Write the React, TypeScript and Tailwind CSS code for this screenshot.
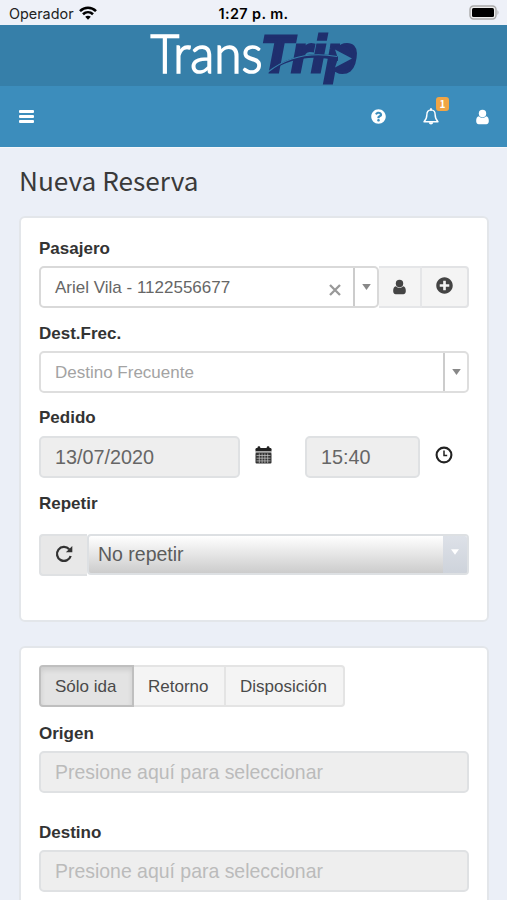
import type { ReactNode } from "react";
import { FaPlusCircle, FaQuestionCircle } from "react-icons/fa";

function UserIcon({ className }: { className?: string }) {
  return (
    <svg viewBox="0 0 14 16" fill="currentColor" className={className}>
      <circle cx="7" cy="4.2" r="4" />
      <path d="M3.2 7.2C1 7.6 0.2 9.6 0.2 12.3C0.2 14.5 1 15.7 3 15.7H11C13 15.7 13.8 14.5 13.8 12.3C13.8 9.6 13 7.6 10.8 7.2C9.8 8.3 8.4 8.8 7 8.8C5.6 8.8 4.2 8.3 3.2 7.2Z" />
    </svg>
  );
}

function WifiIcon() {
  return (
    <svg viewBox="0 0 18 14" className="h-[14px] w-[18px]" fill="none" stroke="#000" strokeWidth="2.6">
      <path d="M1 5.1C5.6 0.6 12.4 0.6 17 5.1" />
      <path d="M4 8.3C6.9 5.5 11.1 5.5 14 8.3" />
      <path d="M9 13.7L6.2 10.8C7.8 9.3 10.2 9.3 11.8 10.8Z" fill="#000" stroke="none" />
    </svg>
  );
}

function BellIcon() {
  return (
    <svg viewBox="0 0 16 17" className="h-[17px] w-4" fill="none" stroke="#fff" strokeWidth="1.4">
      <path d="M8 0.9V2" strokeWidth="1.8" strokeLinecap="round" />
      <path d="M8 1.9C5.2 1.9 3.9 4 3.9 6.2C3.9 9.8 3 11.7 1 13.7H15C13 11.7 12.1 9.8 12.1 6.2C12.1 4 10.8 1.9 8 1.9Z" strokeLinejoin="round" />
      <path d="M5.8 14.2C6 17.2 10 17.2 10.2 14.2Z" fill="#fff" stroke="none" />
    </svg>
  );
}

function CalendarIcon() {
  return (
    <svg viewBox="0 0 17 18" className="h-[18px] w-[17px]">
      <path d="M0.5 3.2Q0.5 2 1.7 2H15.3Q16.5 2 16.5 3.2V5.2H0.5Z" fill="#222" />
      <rect x="2.6" y="0.2" width="2.6" height="3.8" rx="1" fill="#222" />
      <rect x="11.8" y="0.2" width="2.6" height="3.8" rx="1" fill="#222" />
      <rect x="0.5" y="5" width="16" height="2" fill="#aaa" />
      <rect x="0.5" y="6.8" width="16" height="10.6" rx="1" fill="#333" />
      <path d="M1.5 9.5H15.5M1.5 12.2H15.5M1.5 14.9H15.5M4.3 7.4V17M7.1 7.4V17M9.9 7.4V17M12.7 7.4V17" stroke="#ccc" strokeWidth="0.7" />
    </svg>
  );
}

function ClockIcon() {
  return (
    <svg viewBox="0 0 18 18" className="h-[18px] w-[18px]" fill="none" stroke="#222">
      <circle cx="9" cy="9" r="7.4" strokeWidth="2.1" />
      <path d="M9 4.6V9.5H12.2" strokeWidth="1.5" />
    </svg>
  );
}

function RepeatIcon() {
  return (
    <svg viewBox="0 0 18 18" className="h-[18px] w-[18px]">
      <path d="M14.2 4.2A7 7 0 1 0 15.7 11" fill="none" stroke="#333" strokeWidth="2.3" />
      <path d="M17.3 0.9V7.3H10.9Z" fill="#333" />
    </svg>
  );
}

function Caret({ className }: { className?: string }) {
  return (
    <svg viewBox="0 0 10 7" className={className} fill="currentColor">
      <path d="M0 0H10L5 7Z" />
    </svg>
  );
}

function Logo() {
  return (
    <svg viewBox="0 0 210 60" className="h-[60px] w-[210px] overflow-visible">
      <text x="1.5" y="47" fill="#fff" stroke="#fff" strokeWidth="1.7" fontFamily="Lato, sans-serif" fontWeight="300" fontSize="54" textLength="112" lengthAdjust="spacingAndGlyphs">
        Trans
      </text>
      <text x="112" y="46" fill="#1f2f6e" stroke="#1f2f6e" strokeWidth="3" fontFamily="'Liberation Sans', sans-serif" fontStyle="italic" fontWeight="700" fontSize="52" textLength="96" lengthAdjust="spacingAndGlyphs">
        Trip
      </text>
      {/* Arrow that sweeps through the word, its head sits in the last bowl */}
      <ellipse cx="192" cy="32" rx="11" ry="13" fill="#1f2f6e" />
      <path d="M186 23.5L203 32.5L186 41.5L188 35.5V29.5Z" fill="#367fa9" />
      <path d="M120 46C140 33 162 28 189 35V30.5C162 25 138 30 120 46Z" fill="#1f2f6e" />
      <path d="M119 46C138 31 160 25.5 188 30.5" fill="none" stroke="#367fa9" strokeWidth="1.2" />
    </svg>
  );
}

function Label({ children }: { children: ReactNode }) {
  return <div className="h-5 text-[17px] leading-5 font-bold text-[#333]">{children}</div>;
}

function PlaceField({ label }: { label: string }) {
  return (
    <div>
      <Label>{label}</Label>
      <div className="mt-[7px] flex h-[42px] items-center rounded-[5px] border-2 border-[#dfe1e3] bg-[#eee] px-3.5 pt-0.5 text-[19.45px] text-[#bbb]">
        Presione aquí para seleccionar
      </div>
    </div>
  );
}

export default function App() {
  return (
    <main className="h-[900px] w-[507px] overflow-hidden bg-[#ebeff7] font-['Liberation_Sans',sans-serif]">
      {/* Status bar */}
      <div className="flex h-[25px] items-center justify-between bg-[#eef1f8] pr-[7px] pl-[9px]">
        <div className="flex w-[170px] items-center gap-[5px] font-['Inter',sans-serif] text-[14.4px] leading-5 text-[#222]">
          <span className="pt-0.5">Operador</span>
          <WifiIcon />
        </div>
        <div className="pt-0.5 font-['Inter',sans-serif] text-[14.4px] leading-5 font-semibold tracking-[0.4px] whitespace-nowrap text-black">1:27 p. m.</div>
        <div className="flex w-[172px] justify-end">
          <svg viewBox="0 0 31 15" className="h-[15px] w-[31px]">
            <rect x="1" y="1" width="26" height="13" rx="3.5" fill="#eee" stroke="#aaa" strokeWidth="1.4" />
            <rect x="3" y="3" width="22" height="9" rx="1.5" />
            <path d="M28.5 5Q30.5 7.5 28.5 10Z" fill="#aaa" />
          </svg>
        </div>
      </div>

      {/* Brand bar */}
      <div className="flex h-[61px] justify-center bg-[#367fa9] pt-px">
        <Logo />
      </div>

      {/* Navbar */}
      <div className="flex h-[62px] items-center border-b border-[#f5f7fa] bg-[#3c8dbc] pr-[18px] pl-[19px] text-white">
        <div className="flex flex-col gap-[2px]">
          <span className="h-[3px] w-[15px] rounded-[1px] bg-white" />
          <span className="h-[3px] w-[15px] rounded-[1px] bg-white" />
          <span className="h-[3px] w-[15px] rounded-[1px] bg-white" />
        </div>
        <div className="ml-auto flex items-center">
          <FaQuestionCircle size={15} />
          <div className="relative ml-[37px]">
            <BellIcon />
            <span className="absolute -top-[11px] left-[13px] flex h-[14px] w-[13px] items-center justify-center rounded-[3px] bg-[#f0a545] font-['Noto_Sans_CJK_SC',sans-serif] text-[10px] leading-none font-bold">
              1
            </span>
          </div>
          <UserIcon className="ml-[37px] h-4 w-[13px]" />
        </div>
      </div>

      <h1 className="flex h-[68px] items-center pb-0.5 pl-[19px] font-['Noto_Sans_CJK_SC',sans-serif] text-[26.2px] text-[#3a3a3a]">
        Nueva Reserva
      </h1>

      {/* Passenger, destination and schedule */}
      <section className="mx-[19px] h-[406px] w-[470px] rounded-[6px] border-2 border-[#e3e6ea] bg-white px-[18px] pt-[21px]">
        <Label>Pasajero</Label>
        <div className="mt-[7px] flex h-[42px]">
          <div className="flex w-[340px] rounded-[5px] border-2 border-[#d9d9d9] bg-white">
            <div className="flex flex-1 items-center pt-0.5 pl-3.5 text-[17px] text-[#666]">Ariel Vila - 1122556677</div>
            <svg viewBox="0 0 12 12" className="mt-4 mr-3 h-3 w-3" stroke="#999" strokeWidth="2.3">
              <path d="M1 1L11 11M11 1L1 11" />
            </svg>
            <div className="flex w-6 items-center justify-center border-l-2 border-[#ccc] text-[#888]">
              <Caret className="h-[6px] w-[9px]" />
            </div>
          </div>
          <div className="flex w-[43px] items-center justify-center border-y-2 border-r-2 border-[#e5e6e8] bg-[#f4f4f4] text-[#444]">
            <UserIcon className="h-4 w-[13px]" />
          </div>
          <div className="flex flex-1 items-center justify-center rounded-r-[4px] border-y-2 border-r-2 border-[#e2e3e5] bg-[#f4f4f4] text-[#444]">
            <FaPlusCircle size={17} className="mb-[3px]" />
          </div>
        </div>

        <div className="mt-4">
          <Label>Dest.Frec.</Label>
          <div className="mt-[7px] flex h-[42px] rounded-[5px] border-2 border-[#dedede] bg-white">
            <div className="flex flex-1 items-center pt-0.5 pl-3.5 text-[17px] text-[#a3a3a3]">Destino Frecuente</div>
            <div className="flex w-6 items-center justify-center border-l-2 border-[#ccc] text-[#888]">
              <Caret className="h-[6px] w-[9px]" />
            </div>
          </div>
        </div>

        <div className="mt-[15px]">
          <Label>Pedido</Label>
          <div className="mt-2 flex h-[42px]">
            <div className="flex w-[201px] items-center rounded-[5px] border-2 border-[#dfe1e3] bg-[#eee] pt-0.5 pl-3.5 text-[19.8px] text-[#666]">13/07/2020</div>
            <div className="mt-[10px] ml-[15px]">
              <CalendarIcon />
            </div>
            <div className="ml-[33px] flex w-[115px] items-center rounded-[5px] border-2 border-[#dfe1e3] bg-[#eee] pt-0.5 pl-3.5 text-[19.8px] text-[#666]">15:40</div>
            <div className="mt-[10px] ml-[15px]">
              <ClockIcon />
            </div>
          </div>
        </div>

        <div className="mt-4">
          <Label>Repetir</Label>
          <div className="mt-5 flex h-[42px]">
            <div className="flex w-12 items-center justify-center rounded-l-[4px] border-2 border-r-0 border-[#dfe1e3] bg-[#e8e8e8] pr-px pb-0.5">
              <RepeatIcon />
            </div>
            <div className="mb-px flex flex-1 overflow-hidden rounded-[4px] border-2 border-[#dde0e3] bg-linear-to-b from-white to-[#ccc]">
              <div className="flex flex-1 items-center pt-px pl-[9px] text-[19.5px] text-[#5c5c5c]">No repetir</div>
              <div className="flex w-6 justify-center bg-linear-to-b from-[#dde1e8] to-[#ced3db] pt-3 text-white">
                <Caret className="h-2 w-2" />
              </div>
            </div>
          </div>
        </div>
      </section>

      {/* Trip type and places */}
      <section className="mx-[19px] mt-6 h-[300px] w-[470px] rounded-t-[6px] border-2 border-[#e3e6ea] bg-white px-[18px] pt-[17px]">
        <div className="flex h-[42px] w-[306px] text-[17px] text-[#4a4a4a]">
          <div className="flex w-[95px] items-center rounded-l-[4px] border-2 border-[#bfbfbf] bg-[#e3e3e3] pt-0.5 pl-3.5 shadow-[inset_0_3px_5px_rgba(0,0,0,0.1)]">Sólo ida</div>
          <div className="flex w-[92px] items-center border-2 border-l-0 border-[#e4e4e4] bg-[#f4f4f4] pt-0.5 pl-3.5">Retorno</div>
          <div className="flex flex-1 items-center rounded-r-[4px] border-2 border-l-0 border-[#e4e4e4] bg-[#f4f4f4] pt-0.5 pl-3.5">Disposición</div>
        </div>
        <div className="mt-[17px] flex flex-col gap-[30px]">
          <PlaceField label="Origen" />
          <PlaceField label="Destino" />
        </div>
      </section>
    </main>
  );
}
